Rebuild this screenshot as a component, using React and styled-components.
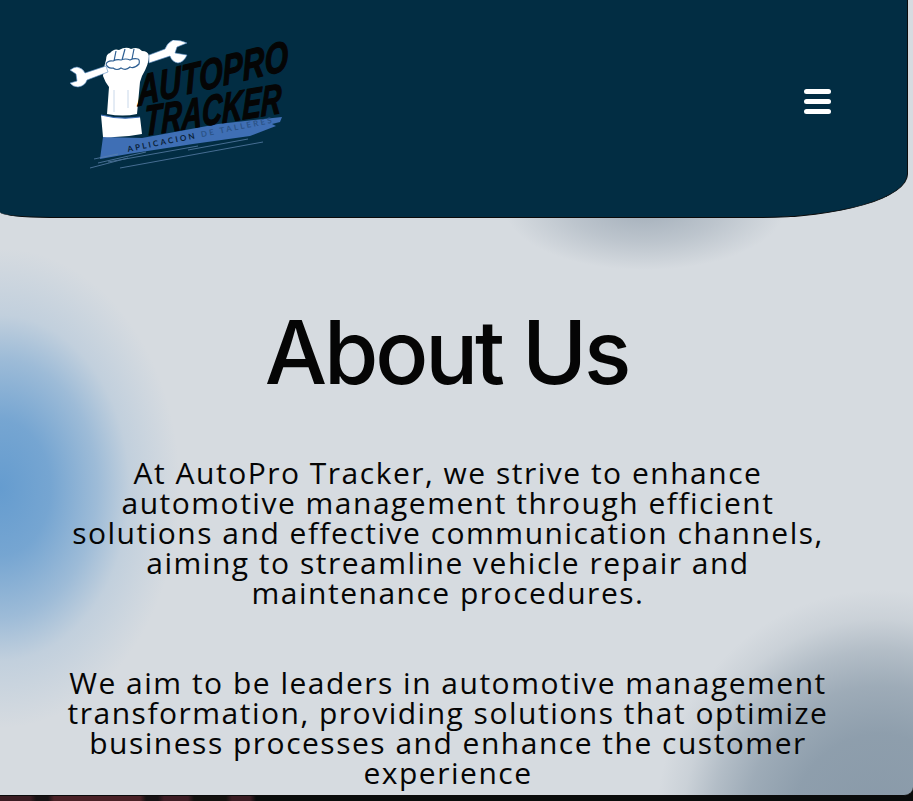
import React from "react";
import styled, { createGlobalStyle } from "styled-components";

const Global = createGlobalStyle`
  html, body { margin: 0; padding: 0; width: 913px; height: 801px; overflow: hidden; background: #0a0c0c; }
  #root { width: 913px; height: 801px; }
`;

const Page = styled.div`
  width: 913px;
  height: 801px;
  overflow: hidden;
  background: linear-gradient(90deg, #3a1c22 0 30px, #181214 36px 48px, #4a2126 54px 140px, #181214 146px 158px, #3e1d24 164px 188px, #14110f 194px 226px, #3a1c22 232px 250px, #0a0c0c 256px);
`;

const Panel = styled.main`
  width: 913px;
  height: 796px;
  overflow: hidden;
  border-bottom-right-radius: 9px;
  border-bottom: 1px solid #0b0b0b;
  box-sizing: border-box;
  background:
    radial-gradient(ellipse 180px 240px at 0px 488px, rgba(101,156,207,1) 0%, rgba(101,156,207,0.85) 28%, rgba(101,156,207,0.5) 54%, rgba(101,156,207,0.18) 72%, rgba(101,156,207,0) 100%),
    radial-gradient(ellipse 225px 240px at 880px 830px, rgba(136,153,168,1) 0%, rgba(136,153,168,0.92) 40%, rgba(136,153,168,0.72) 60%, rgba(136,153,168,0.45) 75%, rgba(136,153,168,0.15) 88%, rgba(136,153,168,0) 100%),
    radial-gradient(ellipse 140px 62px at 645px 208px, rgba(150,163,176,0.8) 0%, rgba(150,163,176,0.4) 55%, rgba(150,163,176,0) 100%),
    #d6dbe0;
`;

const Header = styled.header`
  width: 908px;
  height: 218px;
  box-sizing: border-box;
  padding: 40px 76px 0 68px;
  display: flex;
  justify-content: space-between;
  align-items: flex-start;
  background: #022d43;
  border-bottom: 1px solid #0b0b0b;
  border-right: 1px solid #0b0b0b;
  border-bottom-left-radius: 50px 6px;
  border-bottom-right-radius: 150px 44px;
`;

const LogoBox = styled.div`
  width: 222px;
  height: 130px;
`;

const MenuButton = styled.button`
  margin-top: 49px;
  width: 27px;
  height: 25px;
  padding: 0;
  border: 0;
  background: transparent;
  display: flex;
  flex-direction: column;
  justify-content: space-between;
  cursor: pointer;
`;

const MenuLine = styled.span`
  display: block;
  height: 5px;
  border-radius: 3px;
  background: #fff;
`;

const Content = styled.section`
  width: 896px;
  padding-top: 81px;
  text-align: center;
  color: #050505;
`;

const Title = styled.h1`
  margin: 0 0 53px;
  padding-right: 3px;
  font-family: "Inter", "Liberation Sans", sans-serif;
  font-size: 88px;
  line-height: 106px;
  font-weight: 500;
  letter-spacing: -3.15px;
`;

const Paragraph = styled.p`
  margin: 0 auto 60px;
  width: 775px;
  font-family: "Open Sans", sans-serif;
  font-size: 30px;
  line-height: 30px;
  font-weight: 400;
  letter-spacing: 1.5px;
`;

const BrushWord = styled.text`
  font-family: "Liberation Sans", sans-serif;
  font-style: italic;
  font-weight: 700;
  fill: #050505;
  stroke: #050505;
  stroke-width: 1.2px;
  stroke-linejoin: round;
`;

const Tagline = styled.text`
  font-family: "Lato", sans-serif;
  font-size: 8px;
  font-weight: 700;
  fill: #0b2238;
`;

const Logo = () => (
  <svg width="222" height="130" viewBox="0 0 222 130" role="img" aria-label="AutoPro Tracker">
    <path d="M35 97 L74 98 L150 84 L214 77 L212 82 L204 84 L208 86 L182 96 L125 104 L60 114 L32 119 Z" fill="#3f6fb5" />
    <path d="M22 128 L60 118 M30 123 L78 112 M26 119 L50 114 M52 128 L195 102 M40 122 L130 106 M120 110 L180 99" stroke="#5d83ad" strokeWidth="1" opacity="0.75" />
    <path d="M33 75 Q52 80 72 77 L74 94 Q55 98 35 97 Z" fill="#fff" />
    <path d="M33 75 Q52 80 72 77" stroke="#3f6fb5" strokeWidth="1.2" fill="none" />
    <path d="M39 74 L41 47 Q37 42 35 36 Q36 26 38 20 Q38 14 42 13 Q46 8 51 10 Q58 6 63 9 Q70 6 74 11 Q80 11 81 16 Q81 24 74 36 L72 42 L69 74 Q55 77 39 74 Z" fill="#fff" />
    <path d="M38 24 Q40 29 45 28 Q49 31 53 28 Q58 31 62 27 Q66 29 71 24 Q72 20 70 19 Q66 18 62 20 Q58 18 53 20 Q49 19 45 21 Q40 20 38 24 M48 11 L46 21 M57 9 L54 20 M66 9 L64 19" stroke="#2e5f93" strokeWidth="1.2" fill="none" />
    <path d="M46 50 L46 72 M60 50 L60 68" stroke="#c9d8ea" strokeWidth="1" />
    <path d="M2 30 Q6 27 9 27 Q15 28 17 33 L38 26 L40 32 L19 40 Q17 46 10 47 Q5 47 2 43 L9 41 L8 34 Z" fill="#fff" stroke="#5d8fc5" strokeWidth="0.6" />
    <path d="M81 15 L97 9 Q99 3 105 0 Q113 0 119 3 L109 7 L107 13 L119 15 Q116 22 110 23 Q104 22 102 16 L81 23 Z" fill="#fff" stroke="#5d8fc5" strokeWidth="0.6" />
    <BrushWord transform="translate(70 66) rotate(-13.5) skewX(-11)" fontSize="42" textLength="155" lengthAdjust="spacingAndGlyphs">AUTOPRO</BrushWord>
    <BrushWord transform="translate(76 96) rotate(-9.5) skewX(-11)" fontSize="42" textLength="139" lengthAdjust="spacingAndGlyphs">TRACKER</BrushWord>
    <Tagline transform="translate(60 112) rotate(-11.4)" textLength="147" lengthAdjust="spacing">APLICACION <tspan fill="#2c5488">DE TALLERES</tspan></Tagline>
  </svg>
);

export default function App() {
  return (
    <Page>
      <Global />
      <Panel>
        <Header>
          <LogoBox><Logo /></LogoBox>
          <MenuButton aria-label="Menu">
            <MenuLine /><MenuLine /><MenuLine />
          </MenuButton>
        </Header>
        <Content>
          <Title>About Us</Title>
          <Paragraph>At AutoPro Tracker, we strive to enhance automotive management through efficient solutions and effective communication channels, aiming to streamline vehicle repair and maintenance procedures.</Paragraph>
          <Paragraph>We aim to be leaders in automotive management transformation, providing solutions that optimize business processes and enhance the customer experience</Paragraph>
        </Content>
      </Panel>
    </Page>
  );
}
